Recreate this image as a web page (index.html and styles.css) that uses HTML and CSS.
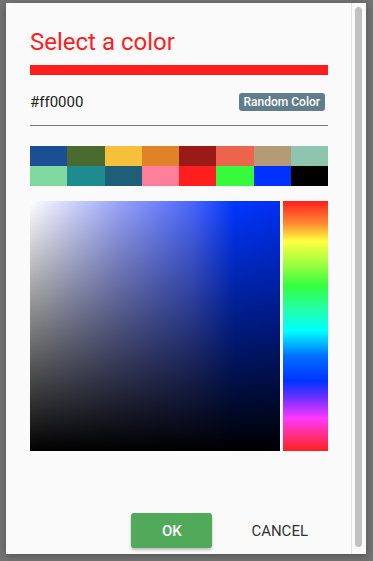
FILE: index.html
```html
<!DOCTYPE html>
<html lang="en">
<head>
  <meta charset="UTF-8">
  <meta name="viewport" content="width=device-width, initial-scale=1.0">
  <title>Select a color</title>
  <link rel="stylesheet" href="styles.css">
</head>
<body>
  <div class="dialog">
    <div class="content">
      <h1 class="title">Select a color</h1>
      <div class="preview"></div>

      <div class="hex-row">
        <span class="hex">#ff0000</span>
        <button class="random">Random Color</button>
      </div>

      <div class="swatches">
        <div class="swatch" style="background:#1c4e96"></div>
        <div class="swatch" style="background:#4a6b30"></div>
        <div class="swatch" style="background:#f6c03b"></div>
        <div class="swatch" style="background:#e08226"></div>
        <div class="swatch" style="background:#9a1a17"></div>
        <div class="swatch" style="background:#ec644b"></div>
        <div class="swatch" style="background:#b59a76"></div>
        <div class="swatch" style="background:#8ec5ae"></div>
        <div class="swatch" style="background:#81d8a0"></div>
        <div class="swatch" style="background:#1e8c8f"></div>
        <div class="swatch" style="background:#1f5e78"></div>
        <div class="swatch" style="background:#fd7f9a"></div>
        <div class="swatch" style="background:#ff1e1e"></div>
        <div class="swatch" style="background:#36fb3c"></div>
        <div class="swatch" style="background:#0031fe"></div>
        <div class="swatch" style="background:#000000"></div>
      </div>

      <div class="picker">
        <div class="sv"><div class="sv-dark"></div></div>
        <div class="hue"></div>
      </div>

      <div class="actions">
        <button class="ok">OK</button>
        <button class="cancel">CANCEL</button>
      </div>
    </div>
    <div class="scrollbar"><div class="thumb"></div></div>
  </div>
</body>
</html>
```

FILE: styles.css
```css
html, body {
  margin: 0;
  height: 100%;
}
body {
  background: #747474;
  font-family: Roboto, "Liberation Sans", sans-serif;
  padding: 3px 7px 7px 6px;
  box-sizing: border-box;
}
.dialog {
  display: flex;
  width: 360px;
  height: 551px;
  background: #fafafa;
  box-shadow: 0 2px 8px rgba(0, 0, 0, 0.3);
}
.content {
  flex: 1;
  display: flex;
  flex-direction: column;
  padding: 24px 23px 6px 24px;
}
.title {
  margin: 0;
  font-size: 24px;
  font-weight: 400;
  line-height: 30px;
  color: #ff1e1e;
}
.preview {
  height: 10px;
  background: #ff1e1e;
  margin-top: 8px;
}
.hex-row {
  display: flex;
  justify-content: space-between;
  align-items: center;
  margin-top: 18px;
  padding-bottom: 14px;
  border-bottom: 1px solid #757575;
}
.hex {
  font-size: 15px;
  color: #222;
}
.random {
  font-family: inherit;
  font-size: 12px;
  font-weight: 500;
  color: #fff;
  background: #607d8b;
  border: none;
  border-radius: 3px;
  padding: 2px 5px;
  margin-right: 3px;
  line-height: 14px;
}
.swatches {
  display: grid;
  grid-template-columns: repeat(8, 1fr);
  grid-auto-rows: 20px;
  margin-top: 20px;
}
.picker {
  display: flex;
  gap: 3px;
  margin-top: 15px;
}
.sv {
  width: 250px;
  height: 250px;
  background: linear-gradient(to right, #ffffff, #9aa4f8 35%, #4a66fc 65%, #0036ff 82%, #0030f4);
}
.sv-dark {
  height: 100%;
  background: linear-gradient(to bottom, rgba(0, 0, 0, 0), rgba(0, 0, 0, 0.45) 45%, #000);
}
.hue {
  width: 45px;
  height: 250px;
  background: linear-gradient(to bottom,
    #ff2020 0%, #ff8a30 9%, #ffff40 16%, #a0ff40 25%, #33ff40 34%,
    #20ffb0 44%, #00ffff 52%, #0070ff 62%, #0033ff 72%,
    #6030ff 78%, #ff38ff 87%, #ff2f80 94%, #ff2020 100%);
}
.actions {
  margin-top: auto;
  display: flex;
  justify-content: flex-end;
  align-items: center;
  gap: 23px;
}
.actions button {
  font-family: inherit;
  font-size: 15px;
  border: none;
  height: 35px;
  border-radius: 3px;
}
.ok {
  width: 81px;
  font-weight: 500;
  background: #51aa5a;
  color: #fff;
  box-shadow: 0 2px 3px rgba(0, 0, 0, 0.25);
}
.cancel {
  background: none;
  color: #333;
  font-weight: 400;
  padding: 0 16px;
  margin-right: 4px;
}
.scrollbar {
  width: 12px;
  border-left: 1px solid #e4e4e4;
  padding: 4px 0 7px 3px;
}
.thumb {
  width: 7px;
  height: 100%;
  background: #c1c1c1;
  border-radius: 4px;
}
```
